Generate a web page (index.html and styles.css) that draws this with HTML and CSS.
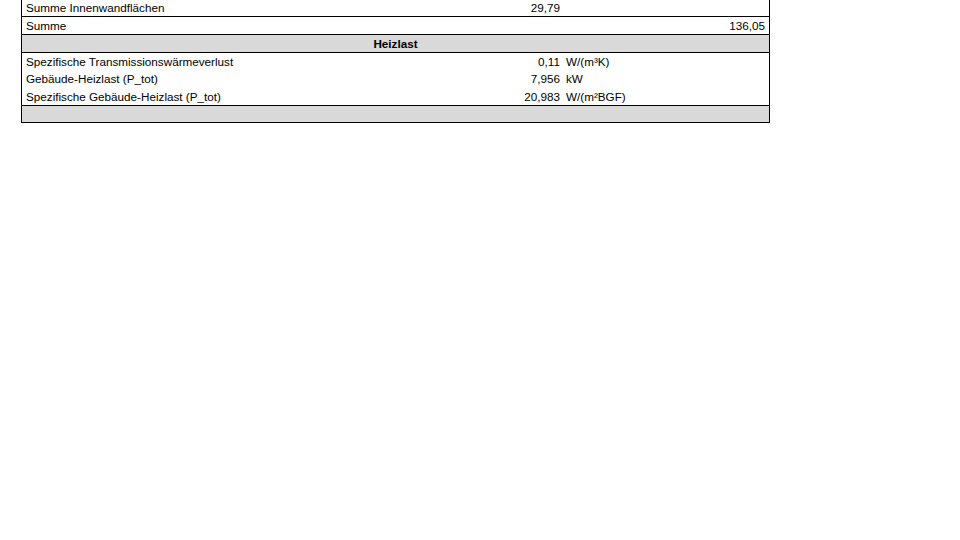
FILE: index.html
```html
<!DOCTYPE html>
<html lang="de">
<head>
<meta charset="utf-8">
<link rel="stylesheet" href="styles.css">
</head>
<body>
<div class="sheet">
  <div class="row r-first">
    <div class="label">Summe Innenwandflächen</div>
    <div class="value">29,79</div>
    <div class="unit"></div>
    <div class="total"></div>
  </div>
  <div class="row r-line">
    <div class="label">Summe</div>
    <div class="value"></div>
    <div class="unit"></div>
    <div class="total">136,05</div>
  </div>
  <div class="row r-head">
    <div class="head">Heizlast</div>
  </div>
  <div class="group">
    <div class="row r-data">
      <div class="label">Spezifische Transmissionswärmeverlust</div>
      <div class="value">0,11</div>
      <div class="unit">W/(m³K)</div>
      <div class="total"></div>
    </div>
    <div class="row r-data">
      <div class="label">Gebäude-Heizlast (P_tot)</div>
      <div class="value">7,956</div>
      <div class="unit">kW</div>
      <div class="total"></div>
    </div>
    <div class="row r-data">
      <div class="label">Spezifische Gebäude-Heizlast (P_tot)</div>
      <div class="value">20,983</div>
      <div class="unit">W/(m²BGF)</div>
      <div class="total"></div>
    </div>
  </div>
  <div class="row r-foot"></div>
</div>
</body>
</html>
```
FILE: styles.css
```css
html, body {
  margin: 0;
  padding: 0;
  background: #ffffff;
}
body {
  font-family: "Liberation Sans", Arial, sans-serif;
  font-size: 11.7px;
  color: #000000;
}
.sheet {
  margin: -3px 0 0 21px;
  width: 747px;
  border: 1px solid #000000;
}
.row {
  display: flex;
  align-items: center;
  height: 17px;
  line-height: 17px;
  border-bottom: 1px solid #000000;
}
.r-first {
  height: 18px;
}
.r-head,
.r-foot {
  background: #d9d9d9;
}
.r-foot {
  border-bottom: none;
  height: 16px;
}
.group {
  border-bottom: 1px solid #000000;
}
.r-data {
  border-bottom: none;
  height: 17.34px;
}
.label {
  flex: 1;
  padding-left: 4px;
  white-space: nowrap;
}
.value {
  width: 100px;
  text-align: right;
  padding-right: 1px;
  box-sizing: border-box;
}
.unit {
  width: 120px;
  padding-left: 5px;
  box-sizing: border-box;
  white-space: nowrap;
}
.total {
  width: 88px;
  text-align: right;
  padding-right: 4px;
  box-sizing: border-box;
}
.head {
  flex: 1;
  text-align: center;
  font-weight: bold;
}
```
